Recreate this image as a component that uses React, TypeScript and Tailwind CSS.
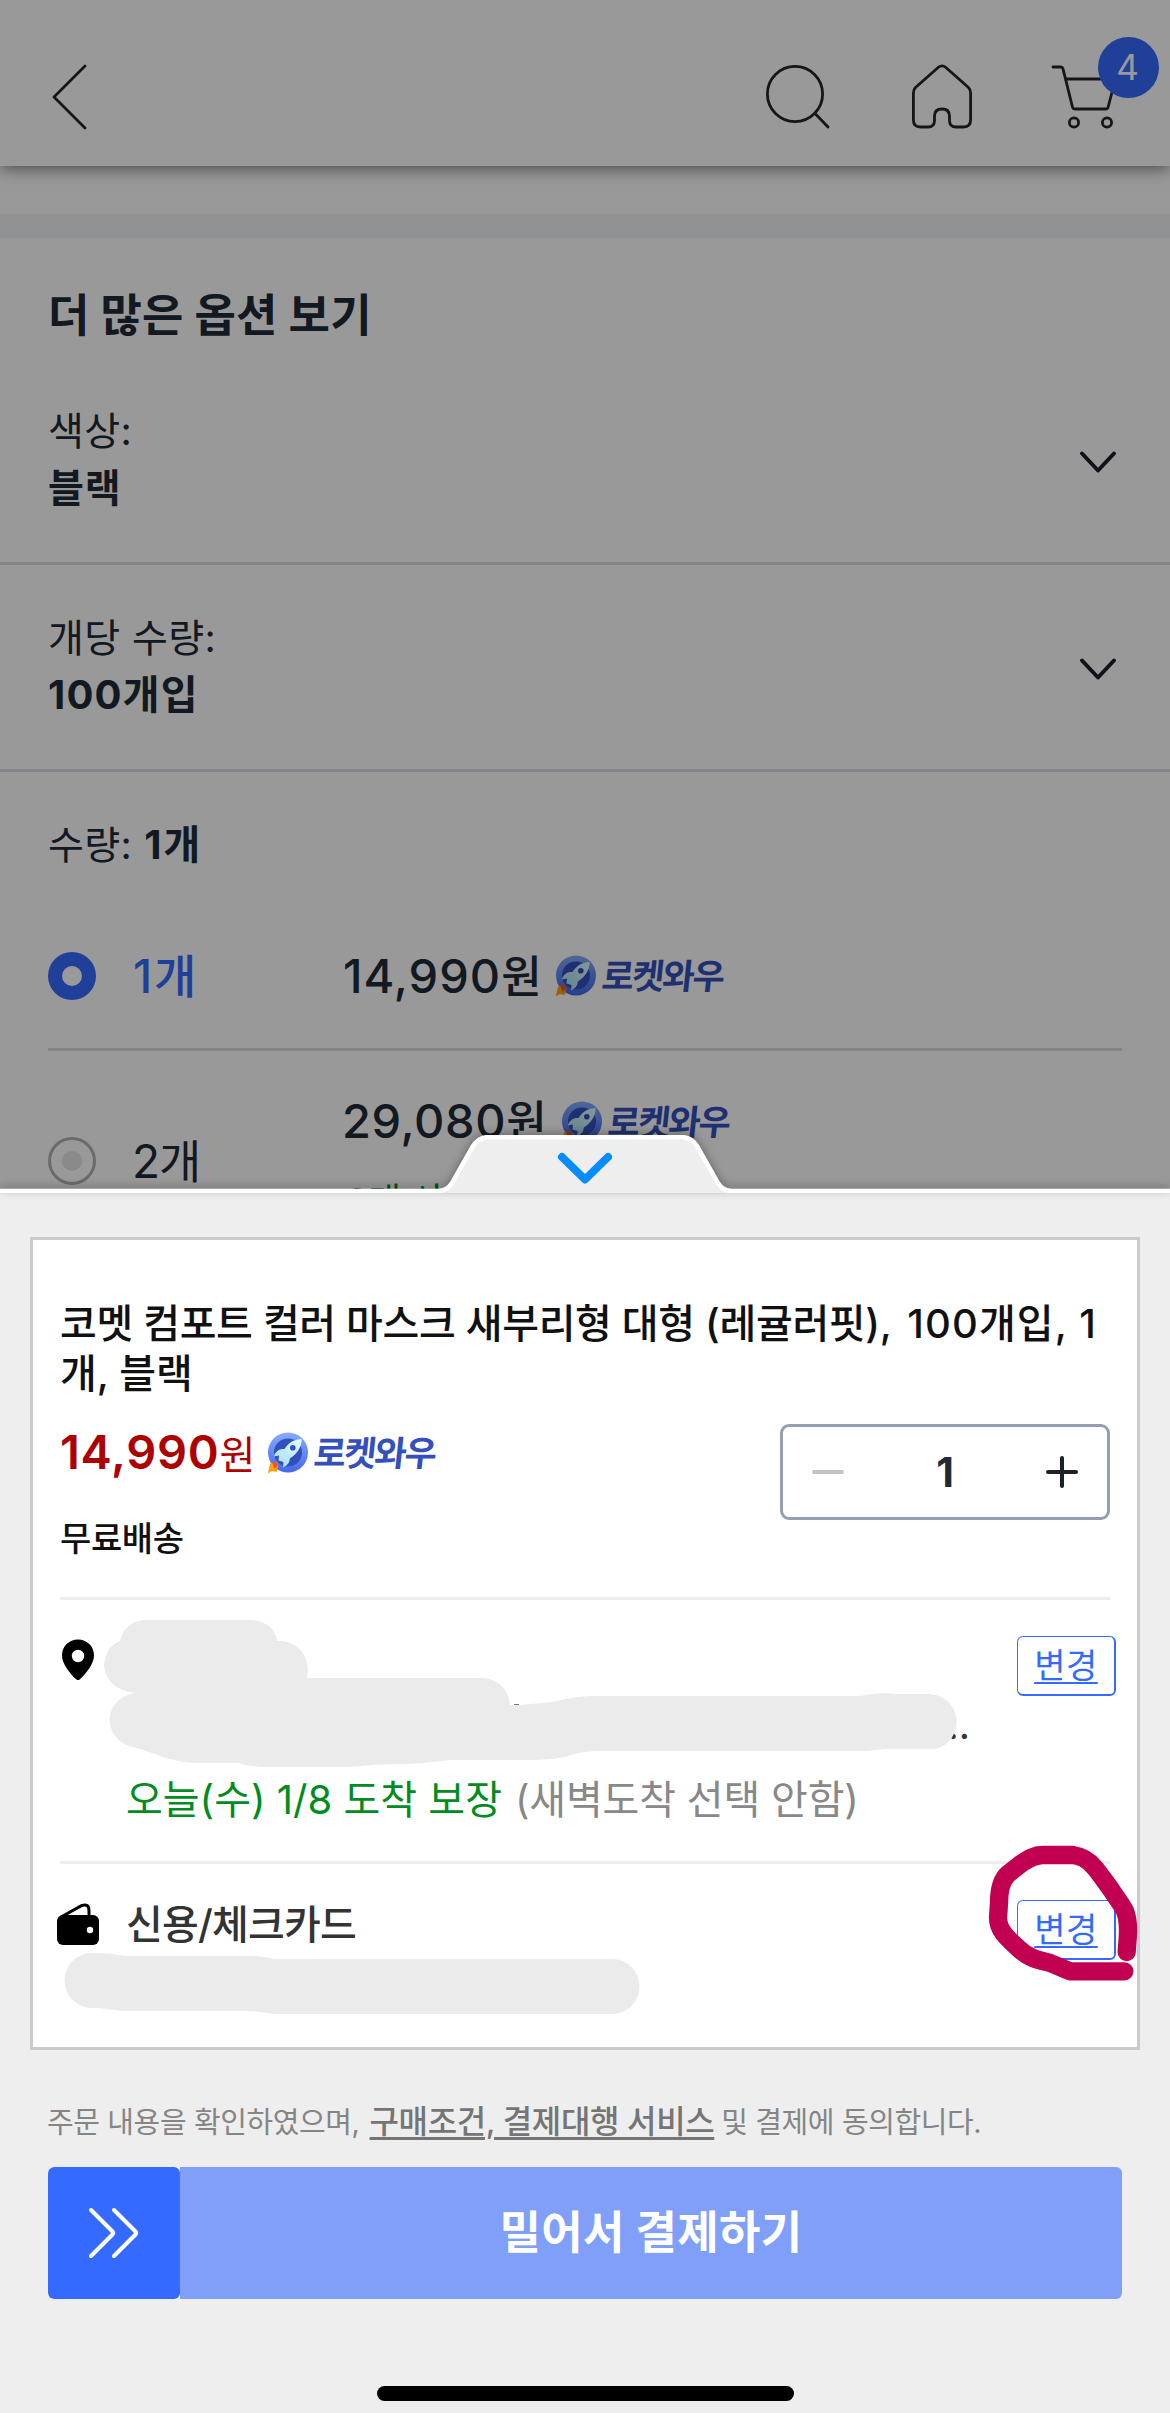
import React from "react";

function RocketWow() {
  return (
    <span className="flex shrink-0 items-center">
      <svg width="42" height="42" viewBox="0 0 42 42" className="shrink-0">
        <defs>
          <linearGradient id="disc" x1="0" y1="0" x2="0" y2="1">
            <stop offset="0" stopColor="#86abff" />
            <stop offset="1" stopColor="#4468ea" />
          </linearGradient>
          <linearGradient id="hull" x1="1" y1="0" x2="0" y2="1">
            <stop offset="0" stopColor="#e4fbfb" />
            <stop offset="1" stopColor="#9fdcf2" />
          </linearGradient>
        </defs>
        <circle cx="21" cy="20.5" r="20" fill="url(#disc)" />
        <circle cx="21" cy="20.5" r="14" fill="#3350bd" />
        <path
          d="M34.8 7C27.5 7 21.5 10.5 17.5 17C12.5 16.5 8.5 19 6.8 24.5L12 23.5L11.5 28.5L16.5 30L16 35.5C20.5 33.5 22.8 30.5 22.8 26.5C30 22 34.5 15.5 34.8 7Z"
          fill="url(#hull)"
        />
        <circle cx="25.8" cy="15.8" r="2.8" fill="#2f4dbd" />
        <path d="M3.2 31.5L9.5 30.3L11.4 33L9.6 40L4.8 39L0.8 41.6Z" fill="#ff9d0a" />
        <path d="M5.5 31L9.5 30.3L11.2 33L7.5 36.8Z" fill="#f4500f" />
      </svg>
      <span className="ml-[5px] inline-block -skew-x-6 text-[35px] leading-[42px] font-bold tracking-[-1.9px] text-[#3450bd]">
        로켓와우
      </span>
    </span>
  );
}

function ChevronDown() {
  return (
    <svg width="40" height="26" viewBox="0 0 40 26" fill="none" stroke="#19212a" strokeWidth="4" strokeLinecap="round" strokeLinejoin="round" className="mt-1">
      <path d="M4 4.5L20 21.5L36 4.5" />
    </svg>
  );
}

function OptionRow({ label, value, valueClass }: { label: string; value: string; valueClass: string }) {
  return (
    <div className="flex h-[207px] items-center justify-between border-b-[3px] border-[#dee0e8] pr-[52px] pl-12">
      <div className="-mt-[2px] flex flex-col leading-[57.5px]">
        <span className="text-[39px] tracking-[0.4px]">{label}</span>
        <span className={valueClass}>{value}</span>
      </div>
      <ChevronDown />
    </div>
  );
}

function Header() {
  return (
    <header className="relative flex h-[166px] shrink-0 items-end justify-between bg-white pr-[52px] pb-9 pl-[50px] shadow-[0_2px_16px_rgba(0,0,0,0.55)]">
      <svg width="40" height="68" viewBox="0 0 40 68" fill="none" stroke="#262626" strokeWidth="2.8" strokeLinecap="round" strokeLinejoin="round">
        <path d="M35 4L4 35L35 66" />
      </svg>
      <div className="flex items-end">
        <svg width="68" height="68" viewBox="0 0 68 68" fill="none" stroke="#262626" strokeWidth="2.8" strokeLinecap="round">
          <circle cx="32" cy="32" r="27.6" />
          <path d="M52 51.5L65 65" />
        </svg>
        <svg width="66" height="68" viewBox="0 0 66 68" fill="none" stroke="#262626" strokeWidth="2.8" strokeLinejoin="round" className="ml-[78px]">
          <path d="M29.4 5.2Q33 2.6 36.6 5.2L59.5 25.5Q61.6 27.6 61.6 31V58Q61.6 65 54.5 65H47Q40.5 65 40.5 58.5V54Q40.5 47 33 47Q25.5 47 25.5 54V58.5Q25.5 65 19 65H11.5Q4.4 65 4.4 58V31Q4.4 27.6 6.5 25.5Z" />
        </svg>
        <div className="relative ml-[74px]">
          <svg width="69" height="68" viewBox="0 0 69 68" fill="none" stroke="#262626" strokeWidth="2.8" strokeLinecap="round" strokeLinejoin="round">
            <path d="M4 5H12Q13.5 5 14 6.8L23.6 45.5Q24 47 25.6 47H57Q58.6 47 59 45.5L66.5 17H17" />
            <circle cx="25" cy="60.5" r="4.6" />
            <circle cx="58" cy="60.5" r="4.6" />
          </svg>
          <span className="absolute top-[-25px] left-[49px] flex h-[61px] w-[61px] items-center justify-center rounded-full bg-[#346aff] pr-[2px] text-[35px] leading-none font-normal text-white">
            4
          </span>
        </div>
      </div>
    </header>
  );
}

function ChangeButton() {
  return (
    <button className="mt-9 -mr-[6px] flex h-[60px] w-[99px] shrink-0 items-center justify-center rounded-[6px] border border-r-2 border-b-2 border-[#346aff] text-[34px] leading-[56px] tracking-[0.5px] text-[#346aff] underline decoration-2 underline-offset-[4px] [text-decoration-skip-ink:none]">
      변경
    </button>
  );
}

export default function App() {
  return (
    <div className="relative h-[2413px] w-[1170px] overflow-hidden bg-white font-[Inter,'Noto_Sans_CJK_KR',sans-serif] text-[#212b36]">
      <div className="flex flex-col">
        <Header />
        <div className="mt-12 h-6 bg-[#eff2f5]" />
        <h2 className="flex h-[120px] items-center pt-[36px] pl-[48px] text-[45px] leading-[60px] font-bold tracking-[0.2px]">
          더 많은 옵션 보기
        </h2>
        <OptionRow label="색상:" value="블랙" valueClass="text-[39px] font-bold tracking-[0.8px]" />
        <OptionRow label="개당 수량:" value="100개입" valueClass="text-[40px] font-bold tracking-[1.2px]" />
        <div className="flex h-[132px] items-center pt-[14px] pl-12 text-[39px] tracking-[0.4px]">
          수량:<span className="ml-[12px] text-[40px] font-bold tracking-[2px]">1개</span>
        </div>
        <div className="mx-12 grid h-[147px] grid-cols-[85px_210px_1fr] items-center border-b-[3px] border-[#dee0e8]">
          <span className="flex h-12 w-12 items-center justify-center rounded-full bg-[#346aff]">
            <span className="h-5 w-5 rounded-full bg-white" />
          </span>
          <span className="text-[46px] leading-[60px] font-medium tracking-[2px] text-[#346aff]">1개</span>
          <div className="flex items-center gap-[12px]">
            <span className="text-[47px] leading-[60px] font-medium tracking-[1px]">
              14,990<span className="text-[44px]">원</span>
            </span>
            <RocketWow />
          </div>
        </div>
        <div className="mx-12 grid h-[220px] grid-cols-[84px_210px_1fr] items-center">
          <span className="flex h-12 w-12 items-center justify-center rounded-full border-[3px] border-[#b2b2b2]">
            <span className="h-5 w-5 rounded-full bg-[#e6e6e6]" />
          </span>
          <span className="text-[46px] leading-[60px] tracking-[-1px]">2개</span>
          <div className="flex flex-col">
            <div className="flex h-[81px] items-center gap-[14px] pt-[2px]">
              <span className="text-[47px] leading-[60px] font-medium tracking-[0.6px]">
                29,080<span className="text-[44px]">원</span>
              </span>
              <RocketWow />
            </div>
            <span className="pl-1 text-[36px] leading-[81px] text-[#00891a]">2개 사면</span>
          </div>
        </div>
      </div>

      <div className="absolute inset-0 bg-black/40" />

      <section className="absolute inset-x-0 top-[1135px] flex flex-col">
        <svg width="1170" height="58" viewBox="0 0 1170 58" className="block drop-shadow-[0_-2px_4px_rgba(0,0,0,0.3)]">
          <path
            d="M-6 56H438Q447 56 452 48L473 11Q479 2 489 2H681Q691 2 697 11L718 48Q723 56 732 56H1176V70H-6Z"
            fill="#eeeeee"
            stroke="#ffffff"
            strokeWidth="4.5"
          />
          <path d="M562 22L585 44.5L608 22" fill="none" stroke="#058cff" strokeWidth="8" strokeLinecap="round" strokeLinejoin="round" />
        </svg>
        <div className="flex h-[1220px] flex-col bg-[#eeeeee]">
          <div className="mx-[30px] mt-11 flex h-[813px] flex-col border-[3px] border-[#cacaca] bg-white px-[27px] pt-[59px]">
            <h1 className="-mr-[16px] h-[98px] text-[40px] leading-[50px] font-medium text-[#111111]">
              <span className="tracking-[-0.35px]">코멧 컴포트 컬러 마스크 새부리형 대형 (레귤러핏), </span>
              <span className="ml-[6px] tracking-[1.1px]">100개입, 1</span>
              <br />
              개, 블랙
            </h1>
            <div className="flex h-[200px] items-start justify-between">
              <div className="flex flex-col pt-[26px]">
                <div className="flex h-[60px] items-center">
                  <span className="text-[47px] leading-[60px] font-semibold tracking-[0.7px] text-[#ae0000]">
                    14,990<span className="text-[39px] font-normal">원</span>
                  </span>
                  <span className="ml-[11px]">
                    <RocketWow />
                  </span>
                </div>
                <span className="mt-[31px] text-[34px] leading-[50px] font-medium tracking-[-0.4px] text-[#111111]">무료배송</span>
              </div>
              <div className="mt-[27px] flex h-24 w-[330px] items-center justify-between rounded-[9px] border-[3px] border-[#93a0af] px-[29px]">
                <svg width="32" height="32" viewBox="0 0 32 32" stroke="#c0c5cb" strokeWidth="4" strokeLinecap="round">
                  <path d="M2 16H30" />
                </svg>
                <span className="text-[41px] leading-none font-bold">1</span>
                <svg width="32" height="32" viewBox="0 0 32 32" stroke="#19212a" strokeWidth="4" strokeLinecap="round">
                  <path d="M2 16H30M16 2V30" />
                </svg>
              </div>
            </div>
            <div className="h-[3px] shrink-0 bg-[#ededed]" />
            <div className="flex h-[261px] items-start">
              <div className="w-[66px] shrink-0 pt-[39px]">
                <svg width="36" height="42" viewBox="0 0 36 42">
                  <path
                    fillRule="evenodd"
                    d="M18 .6C27 .6 34 7.4 34 16.4C34 25 26 34.5 19.6 40.4Q18 41.8 16.4 40.4C10 34.5 2 25 2 16.4C2 7.4 9 .6 18 .6ZM18 10.8A6.2 6.2 0 1 0 18 23.2A6.2 6.2 0 1 0 18 10.8Z"
                    fill="#000000"
                  />
                </svg>
              </div>
              <div className="flex grow flex-col pt-[100px]">
                <span className="pr-[47px] text-right text-[39px] leading-[50px] text-[#333333]">..</span>
                <span className="mt-[20px] text-[40px] leading-[60px] whitespace-nowrap">
                  <span className="text-[#008c1e]">오늘(수) 1/8 도착 보장</span>
                  <span className="ml-[13px] tracking-[-0.2px] text-[#888888]">(새벽도착 선택 안함)</span>
                </span>
              </div>
              <ChangeButton />
            </div>
            <div className="h-[3px] shrink-0 bg-[#ededed]" />
            <div className="flex items-start">
              <div className="w-[66px] shrink-0 pt-[38px]">
                <svg width="46" height="44" viewBox="0 0 46 44" className="-ml-[4px]">
                  <path d="M5 15L25.5 3.6Q33 .8 33 9V15" fill="none" stroke="#000000" strokeWidth="3" />
                  <rect x="1" y="13" width="42" height="30" rx="6" fill="#000000" />
                  <circle cx="34" cy="28" r="3.2" fill="#ffffff" />
                </svg>
              </div>
              <span className="grow pt-[31px] text-[40px] leading-[60px] font-medium tracking-[-0.8px] text-[#333333]">신용/체크카드</span>
              <ChangeButton />
            </div>
          </div>

          <p className="mt-[52px] ml-[47px] flex h-10 items-baseline text-[29px] leading-[40px] tracking-[-0.4px] whitespace-nowrap text-[#858585]">
            주문 내용을 확인하였으며,
            <a className="mr-[7px] ml-[10px] text-[32px] font-medium text-[#757575] underline decoration-[3px] underline-offset-[4px]">
              구매조건, 결제대행 서비스
            </a>
            및 결제에 동의합니다.
          </p>

          <div className="mx-12 mt-[25px] flex h-[132px] shrink-0 overflow-hidden rounded-[6px] bg-[#7f9ff8]">
            <span className="w-[132px] bg-white">
              <span className="flex h-[132px] w-[132px] items-center justify-center rounded-[6px] bg-[#346aff]">
                <svg width="54" height="54" viewBox="0 0 54 54" fill="none" stroke="#ffffff" strokeWidth="4" strokeLinecap="round" strokeLinejoin="round">
                  <path d="M4 4L25.5 25.5Q27 27 25.5 28.5L4 50M27 4L48.5 25.5Q50 27 48.5 28.5L27 50" />
                </svg>
              </span>
            </span>
            <span className="flex grow items-center justify-center text-[45px] leading-[60px] font-bold tracking-[0.3px] text-white">
              밀어서 결제하기
            </span>
          </div>
          <div className="mx-auto mt-[87px] h-[15px] w-[417px] shrink-0 rounded-full bg-black" />
        </div>
      </section>

      <svg width="1170" height="2413" viewBox="0 0 1170 2413" className="pointer-events-none absolute inset-0">
        <path
          d="M144 1620H252Q274 1622 277 1641H283Q306 1645 308 1670L307 1678H484Q508 1682 510 1705H520L552 1702Q575 1696 592 1696H860Q880 1692 895 1694H930A28 28 0 0 1 936 1749H885L868 1751H597Q580 1751 565 1757Q550 1760 535 1760H450Q420 1764 400 1764Q375 1764 350 1767H262Q245 1766 240 1763H195Q175 1762 158 1755L137 1748C101 1742 101 1699 135 1693Q106 1689 104 1665Q106 1646 120 1641Q124 1622 144 1620Z"
          fill="#ebebeb"
        />
        <path d="M514 1704.5H519" stroke="#777777" strokeWidth="1" />
        <path
          d="M92 1953Q110 1953 125 1956H255Q266 1957 275 1959H612A27.5 27.5 0 0 1 612 2014H275Q265 2013 252 2011H125Q110 2010 98 2008H92A27.5 27.5 0 0 1 92 1953Z"
          fill="#ebebeb"
        />
        <path
          d="M1126.7 1952C1127 1946 1128 1938 1128 1930C1128 1922 1127 1916 1125 1911C1121 1903 1115 1896 1110 1888C1104 1880 1100 1874 1095 1868C1087 1858 1080 1856 1073 1855L1043 1855C1034 1855 1028 1859 1022 1863L1008 1874C1000 1881 999 1893 999 1903L998 1918C998 1930 1007 1938 1018 1948C1028 1958 1038 1960 1050 1963C1058 1966 1064 1969 1070 1971.3H1124.3"
          fill="none"
          stroke="#c20052"
          strokeWidth="18.3"
          strokeLinecap="round"
          strokeLinejoin="round"
        />
      </svg>
    </div>
  );
}
